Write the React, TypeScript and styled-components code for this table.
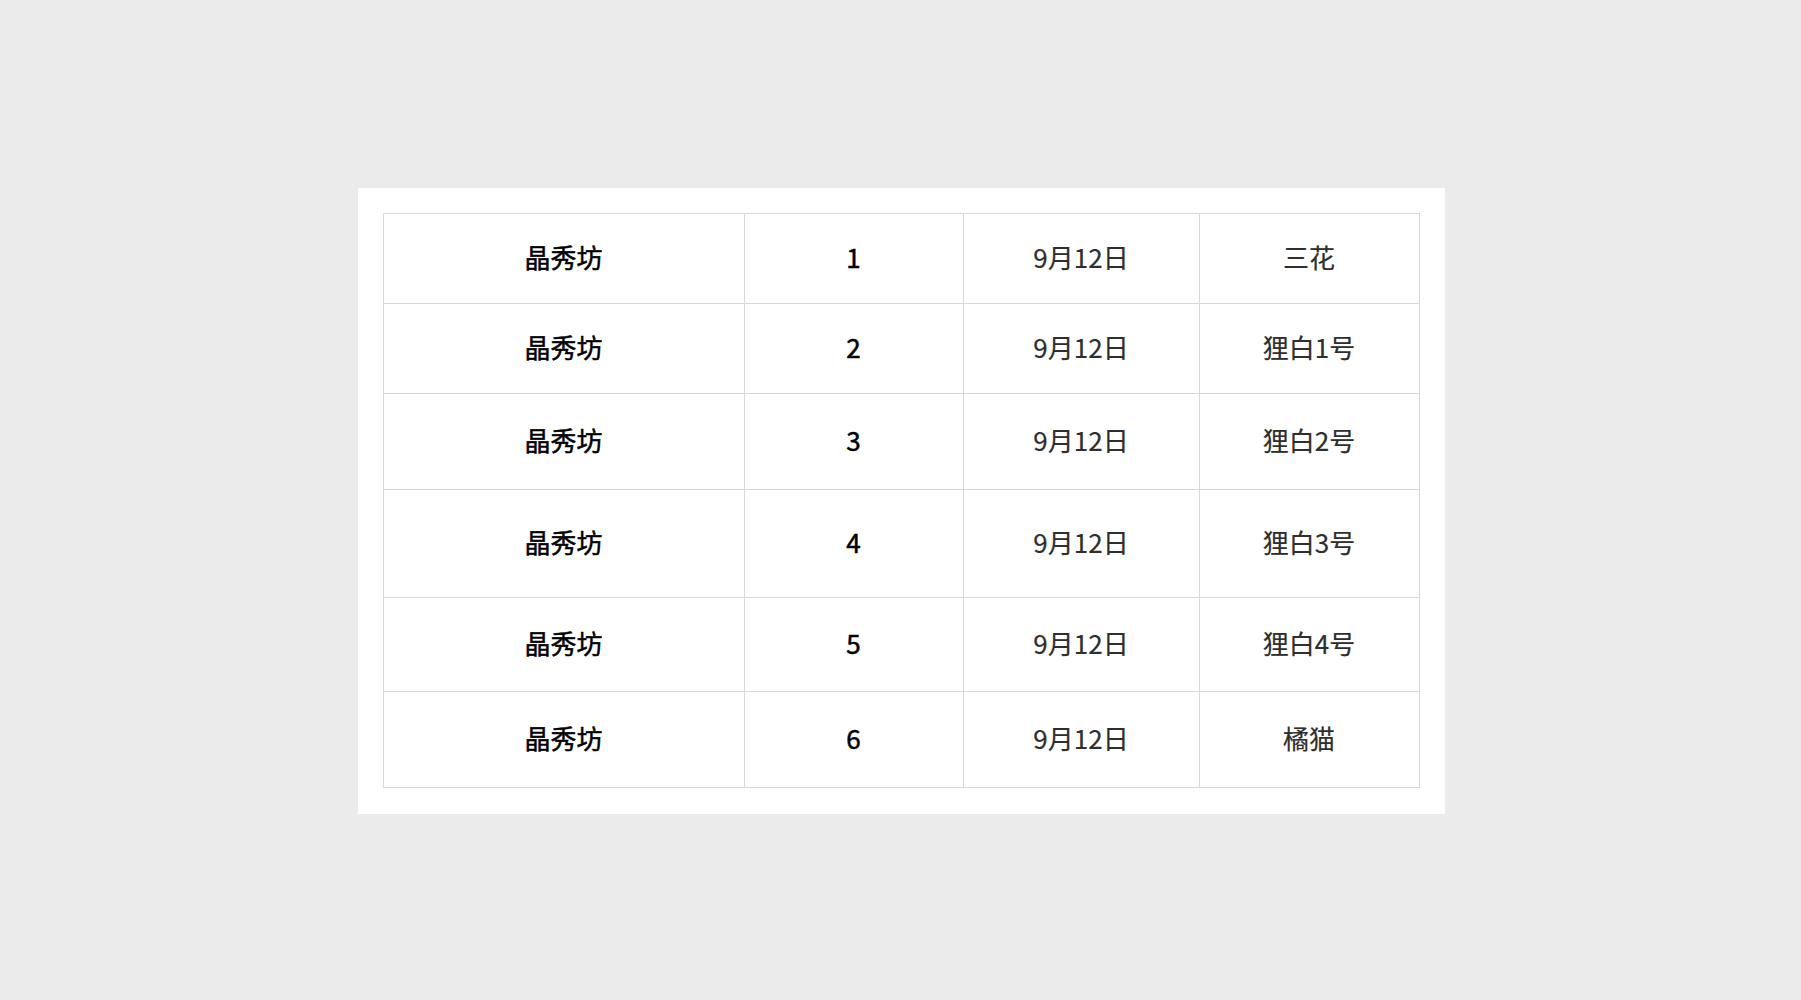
import React from 'react'
import styled, { createGlobalStyle } from 'styled-components'

const GlobalStyle = createGlobalStyle`
  html, body {
    margin: 0;
    padding: 0;
    background: #ebebeb;
  }
  body {
    font-family: "Noto Sans CJK SC", "Noto Sans", sans-serif;
  }
`

const Page = styled.div`
  display: flex;
  justify-content: center;
  align-items: center;
  min-height: 100vh;
`

const Card = styled.div`
  background: #fff;
  padding: 25px 25px 26px 25px;
  margin: 1px 0 0 1px;
`

const Table = styled.table`
  border-collapse: collapse;
  table-layout: fixed;
  width: 1036px;
`

const Row = styled.tr<{ h: number }>`
  height: ${(p) => p.h}px;
`

const Cell = styled.td<{ strong?: boolean }>`
  border: 1px solid #d8d8d8;
  padding: 0 0 3px;
  text-align: center;
  vertical-align: middle;
  font-size: 26px;
  font-weight: 400;
  color: ${(p) => (p.strong ? '#000' : '#2e2e2e')};
  -webkit-text-stroke: ${(p) => (p.strong ? '0.5px #000' : '0.2px #2e2e2e')};
`

const rows = [
  { no: '1', cat: '三花', h: 90 },
  { no: '2', cat: '狸白1号', h: 90 },
  { no: '3', cat: '狸白2号', h: 96 },
  { no: '4', cat: '狸白3号', h: 108 },
  { no: '5', cat: '狸白4号', h: 94 },
  { no: '6', cat: '橘猫', h: 96 },
]

const App: React.FC = () => {
  return (
    <>
      <GlobalStyle />
      <Page>
        <Card>
          <Table>
            <colgroup>
              <col style={{ width: 361 }} />
              <col style={{ width: 219 }} />
              <col style={{ width: 236 }} />
              <col style={{ width: 220 }} />
            </colgroup>
            <tbody>
              {rows.map((r) => (
                <Row key={r.no} h={r.h}>
                  <Cell strong>晶秀坊</Cell>
                  <Cell strong>{r.no}</Cell>
                  <Cell>9月12日</Cell>
                  <Cell>{r.cat}</Cell>
                </Row>
              ))}
            </tbody>
          </Table>
        </Card>
      </Page>
    </>
  )
}

export default App
